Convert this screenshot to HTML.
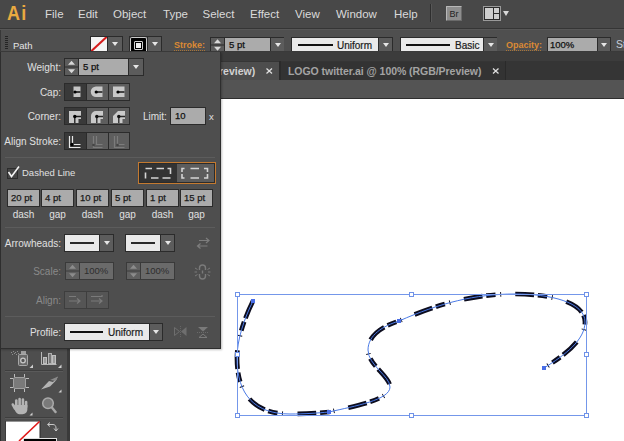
<!DOCTYPE html>
<html><head><meta charset="utf-8">
<style>
*{margin:0;padding:0;box-sizing:border-box}
html,body{width:624px;height:441px;overflow:hidden;background:#fff}
body{position:relative;font-family:"Liberation Sans",sans-serif;}
.a{position:absolute}
#menubar{left:0;top:0;width:624px;height:28px;background:#484848}
.mi{position:absolute;top:7px;font-size:11.5px;color:#dadada;line-height:14px}
#ctl{left:0;top:28px;width:624px;height:24px;background:#4f4f4f;border-top:1px solid #353535;box-shadow:inset 1px 0 #383838}
#ctl:before{content:"";position:absolute;left:0;top:0;width:624px;height:1px;background:#575757}
#ctl:after{content:"";position:absolute;left:0;top:22px;width:624px;height:1px;background:#3a3a3a}
#tabbar{left:0;top:52px;width:624px;height:28px;background:#3c3c3c}
#docbar{left:0;top:80px;width:624px;height:19px;background:#545454;border-bottom:1px solid #2e2e2e}
#canvas{left:70px;top:99px;width:554px;height:343px;background:#fff}
#tools{left:0;top:98px;width:70px;height:343px;background:#4e4e4e}
#panel{left:0;top:52px;width:221px;height:297px;background:#4e4e4e;border:1px solid #2e2e2e;border-top:none;box-shadow:1px 1px 2px rgba(0,0,0,.25)}
.lbl{position:absolute;font-size:10px;color:#e0e0e0;line-height:12px;white-space:nowrap}
.dis{color:#8a8a8a}
.lb9{font-size:9.5px;color:#e4e4e4;line-height:11px;white-space:nowrap}
.lbo{font-size:9px;font-weight:bold;color:#dc8a34;line-height:11px;white-space:nowrap;padding-bottom:0;background:repeating-linear-gradient(90deg,#a87438 0 1px,transparent 1px 2px) left bottom/100% 1px no-repeat}
.dd{background:#5c5c5c}
.dd:after{content:"";position:absolute;left:50%;top:50%;margin-left:-3px;margin-top:-2px;border-left:3px solid transparent;border-right:3px solid transparent;border-top:4px solid #e6e6e6}
.spin{background:#595959}
.spin:before{content:"";position:absolute;left:3px;top:2px;border-left:3.5px solid transparent;border-right:3.5px solid transparent;border-bottom:4px solid #d8d8d8}
.spin:after{content:"";position:absolute;left:3px;top:8px;border-left:3.5px solid transparent;border-right:3.5px solid transparent;border-top:4px solid #d8d8d8}
.inp{background:#ababab;color:#111;font-size:9.5px;-webkit-text-stroke:0.25px #111;line-height:14px;padding-left:4px;white-space:nowrap}
.wbox{background:#e9e9e9;color:#1a1a1a;font-size:10px;-webkit-text-stroke:0.2px #1a1a1a;line-height:11px;white-space:nowrap}
.btn{background:#5e5e5e}
.btn.sel{background:#393939}
.dbox{top:189px;width:33px;height:18px;background:#ababab;border:1px solid #2b2b2b;color:#1a1a1a;font-size:9.5px;-webkit-text-stroke:0.25px #1a1a1a;line-height:16px;padding-left:3px;white-space:nowrap}
.dl{top:209px;width:33px;text-align:center}
.dspin{background:#4d4d4d}
.dinp{background:#6a6a6a;color:#2e2e2e;font-size:9.5px;line-height:16px;padding-left:4px}
.sep{position:absolute;height:1px;background:#444;border-bottom:1px solid #5c5c5c}
</style></head><body>

<div id="menubar" class="a">
  <div class="a" style="left:7px;top:2px;font-size:20px;font-weight:bold;color:#eaaa40;line-height:22px;transform:scaleX(0.9);transform-origin:0 0;letter-spacing:1.5px">Ai</div>
  <div class="mi" style="left:45px">File</div>
  <div class="mi" style="left:78px">Edit</div>
  <div class="mi" style="left:113px">Object</div>
  <div class="mi" style="left:163px">Type</div>
  <div class="mi" style="left:202.5px">Select</div>
  <div class="mi" style="left:250px">Effect</div>
  <div class="mi" style="left:295px">View</div>
  <div class="mi" style="left:336px">Window</div>
  <div class="mi" style="left:394px">Help</div>
  <div class="a" style="left:430px;top:4px;width:1px;height:18px;background:#2e2e2e"></div>
  <div class="a" style="left:431px;top:4px;width:1px;height:18px;background:#575757"></div>
  <div class="a" style="left:446px;top:6px;width:16px;height:15px;background:#8e8e8e;border:1px solid #b8b8b8;border-right-color:#6a6a6a;border-bottom-color:#6a6a6a;border-radius:1px"></div>
  <div class="a" style="left:449.5px;top:9px;font-size:9px;line-height:10px;color:#222">Br</div>
  <div class="a" style="left:483px;top:6px;width:18px;height:15px;background:#2c2c2c;border:1px solid #9a9a9a"></div>
  <div class="a" style="left:485px;top:8px;width:8px;height:11px;background:#cfcfcf"></div>
  <div class="a" style="left:494px;top:8px;width:5px;height:5px;background:#cfcfcf"></div>
  <div class="a" style="left:494px;top:14px;width:5px;height:5px;background:#cfcfcf"></div>
  <div class="a" style="left:503px;top:11px;border-left:3px solid transparent;border-right:3px solid transparent;border-top:5px solid #d8d8d8"></div>
</div>

<div id="ctl" class="a">
  <div class="a" style="left:5px;top:7px;width:3px;height:14px;background:repeating-linear-gradient(#252525 0 1px,transparent 1px 2px)"></div>
  <div class="a lb9" style="left:13px;top:11px">Path</div>
  <div class="a" style="left:90px;top:7px;width:33px;height:16px;background:#2b2b2b"></div>
  <div class="a" style="left:91px;top:8px;width:16px;height:14px;background:#f4f4f4;overflow:hidden"><div class="a" style="left:-3px;top:6px;width:22px;height:2px;background:#d41b1b;transform:rotate(-43deg)"></div></div>
  <div class="a dd" style="left:108px;top:8px;width:14px;height:14px"></div>
  <div class="a" style="left:129px;top:7px;width:33px;height:16px;background:#2b2b2b"></div>
  <div class="a" style="left:130px;top:8px;width:17px;height:15px;background:#000;border:1px solid #c8c8c8;border-bottom:none;border-radius:2px 2px 0 0"></div>
  <div class="a" style="left:134px;top:12px;width:9px;height:9px;border:1px solid #d0d0d0;border-radius:1px;background:#000"></div>
  <div class="a" style="left:136px;top:14px;width:5px;height:5px;background:#f0f0f0"></div>
  <div class="a dd" style="left:148px;top:8px;width:13px;height:14px"></div>
  <div class="a lbo" style="left:174px;top:11px">Stroke:</div>
  <div class="a" style="left:210px;top:8px;width:74px;height:16px;background:#2b2b2b"></div>
  <svg class="a" style="left:211px;top:9px" width="13" height="14"><rect x="0" y="0" width="13" height="6.5" fill="#5c5c5c"/><rect x="0" y="7.5" width="13" height="6.5" fill="#5c5c5c"/><path d="M3.0,5.25 L6.5,1.25 L10.0,5.25 Z" fill="#d8d8d8"/><path d="M3.0,8.75 L6.5,12.75 L10.0,8.75 Z" fill="#d8d8d8"/></svg>
  <div class="a inp" style="left:225px;top:9px;width:45px;height:14px">5 pt</div>
  <div class="a dd" style="left:271px;top:9px;width:13px;height:14px"></div>
  <div class="a" style="left:291px;top:8px;width:102px;height:16px;background:#2b2b2b"></div>
  <div class="a wbox" style="left:292px;top:9px;width:86px;height:14px"><div class="a" style="left:6px;top:6px;width:35px;height:2px;background:#111"></div><span class="a" style="left:45px;top:2px">Uniform</span></div>
  <div class="a dd" style="left:379px;top:9px;width:13px;height:14px"></div>
  <div class="a" style="left:400px;top:8px;width:97px;height:16px;background:#2b2b2b"></div>
  <div class="a wbox" style="left:401px;top:9px;width:82px;height:14px"><div class="a" style="left:5px;top:6px;width:44px;height:2px;background:#111"></div><span class="a" style="left:54px;top:2px">Basic</span></div>
  <div class="a dd" style="left:484px;top:9px;width:13px;height:14px"></div>
  <div class="a lbo" style="left:506px;top:11px">Opacity:</div>
  <div class="a" style="left:547px;top:8px;width:64px;height:16px;background:#2b2b2b"></div>
  <div class="a inp" style="left:548px;top:9px;width:49px;height:14px;padding-left:2px">100%</div>
  <div class="a dd" style="left:598px;top:9px;width:12px;height:14px"></div>
  <div class="a lb9" style="left:616px;top:10px;font-size:10.5px;color:#c8d0dc">St</div>
</div>
<div id="tabbar" class="a">
  <div class="a" style="left:0;top:9px;width:624px;height:19px;background:#353535"></div>
  <div class="a" style="left:0;top:10px;width:279px;height:18px;background:#4d4d4d"></div>
  <div class="a" style="left:212px;top:13px;font-size:10.5px;line-height:12px;color:#d2d2d2;font-weight:bold">Preview)</div>
  <div class="a" style="left:279px;top:9px;width:2px;height:19px;background:#2b2b2b"></div>
  <div class="a" style="left:281px;top:10px;width:224px;height:18px;background:#333333"></div>
  <div class="a" style="left:288px;top:13px;font-size:10.5px;line-height:12px;color:#a4a4a4;font-weight:bold;letter-spacing:-0.05px">LOGO twitter.ai @ 100% (RGB/Preview)</div>
  <div class="a" style="left:505px;top:9px;width:1px;height:19px;background:#2a2a2a"></div>
  <svg class="a" style="left:0;top:0" width="624" height="28"><g stroke="#e0e0e0" stroke-width="1.25"><path d="M266.5,16.5 L272,21.5 M272,16.5 L266.5,21.5"/><path d="M493,16.5 L498.5,21.5 M498.5,16.5 L493,21.5"/></g></svg>
</div>
<div id="docbar" class="a"></div>
<div id="canvas" class="a"></div>
<svg class="a" style="left:0;top:0" width="624" height="441" viewBox="0 0 624 441">
  <path d="M253,301 C244,319 237,340 237,358 C237,395 255,414 290,414 C305,414 318,413 329,412 C355,406 390,400 390,387 C390,376 368,365 368,350 C368,335 383,326 399,321 C440,303 475,294 515,294 C550,294 585,302 585,322 C585,340 565,355 544,368" fill="none" stroke="#0d0d1e" stroke-width="4.7" stroke-dasharray="18.79 3.76 9.39 4.7 0.94 14.09"/>
  <path d="M253,301 C244,319 237,340 237,358 C237,395 255,414 290,414 C305,414 318,413 329,412 C355,406 390,400 390,387 C390,376 368,365 368,350 C368,335 383,326 399,321 C440,303 475,294 515,294 C550,294 585,302 585,322 C585,340 565,355 544,368" fill="none" stroke="#4a7ae6" stroke-width="1"/>
  <g fill="#4a6ee6"><rect x="251" y="299" width="4" height="4"/><rect x="327" y="410" width="4" height="4"/><rect x="397" y="319" width="4" height="4"/><rect x="542" y="366" width="4" height="4"/></g>
  <rect x="237.5" y="294.5" width="349" height="121" fill="none" stroke="#7497ea" stroke-width="1"/>
  <g fill="#fff" stroke="#6f92e8" stroke-width="1"><rect x="235.5" y="292.5" width="4" height="4"/><rect x="409.5" y="292.5" width="4" height="4"/><rect x="584.5" y="292.5" width="4" height="4"/><rect x="235.5" y="352.5" width="4" height="4"/><rect x="584.5" y="352.5" width="4" height="4"/><rect x="235.5" y="413.5" width="4" height="4"/><rect x="409.5" y="413.5" width="4" height="4"/><rect x="584.5" y="413.5" width="4" height="4"/></g>
</svg>
<div id="tools" class="a"></div>
<svg class="a" style="left:0;top:0" width="72" height="441" viewBox="0 0 72 441">
  <rect x="0" y="348" width="1" height="93" fill="#2e2e2e"/>
  <rect x="67" y="348" width="3" height="93" fill="#3a3a3a"/>
  <!-- symbol sprayer -->
  <g fill="#8e8e8e"><rect x="11" y="352" width="1" height="1"/><rect x="13" y="351" width="1" height="1"/><rect x="15" y="352" width="1" height="1"/><rect x="12" y="354" width="1" height="1"/><rect x="14" y="353" width="1" height="1"/><rect x="17" y="351" width="1" height="1"/><rect x="16" y="354" width="1" height="1"/><rect x="18" y="353" width="1" height="1"/></g>
  <rect x="21" y="351" width="5" height="3" fill="#a0a0a0"/>
  <rect x="18.5" y="354.5" width="9" height="11" fill="#6a6a6a" stroke="#a8a8a8" stroke-width="1" rx="1"/>
  <circle cx="23" cy="360.5" r="2.3" fill="#555" stroke="#c8c8c8" stroke-width="1.3"/>
  <path d="M33,364.5 L33,368 L29.5,368 Z" fill="#d0d0d0"/>
  <!-- graph -->
  <path d="M41.5,352 L41.5,364.5 L56.5,364.5" fill="none" stroke="#b8b8b8" stroke-width="1"/>
  <rect x="43.5" y="357.5" width="3" height="6" fill="#9a9a9a" stroke="#c0c0c0" stroke-width="1"/>
  <rect x="48.5" y="353.5" width="3" height="10" fill="#777" stroke="#b0b0b0" stroke-width="1"/>
  <rect x="52.5" y="355.5" width="3" height="8" fill="#9a9a9a" stroke="#c0c0c0" stroke-width="1"/>
  <path d="M61.5,364.5 L61.5,368 L58,368 Z" fill="#d0d0d0"/>
  <rect x="5" y="370" width="58" height="1" fill="#3e3e3e"/><rect x="5" y="371" width="58" height="1" fill="#5a5a5a"/>
  <!-- artboard -->
  <rect x="13.5" y="377.5" width="12" height="11" rx="1.5" fill="#7a7a7a" stroke="#a0a0a0" stroke-width="1"/>
  <g stroke="#bcbcbc" stroke-width="1"><path d="M14.5,374 V377 M24.5,374 V377 M14.5,389 V392 M24.5,389 V392 M10,378.5 H13 M26,378.5 H29 M10,387.5 H13 M26,387.5 H29"/></g>
  <!-- slice -->
  <path d="M41,389.5 L49,381 L53,382 L58,376.5 L56,380.5 L50,386.5 Z" fill="#b4b4b4"/>
  <path d="M50,380 L58,376.5 L55.5,381 Z" fill="#8a8a8a"/>
  <path d="M61.5,389.5 L61.5,392.5 L58.5,392.5 Z" fill="#d0d0d0"/>
  <!-- hand -->
  <g stroke="#b4b4b4" stroke-width="2.6" stroke-linecap="round" fill="none">
    <path d="M16.3,407 V400.5"/><path d="M19.6,406 V399"/><path d="M22.9,406 V399.5"/><path d="M26.1,407 V402"/>
    <path d="M15,408.5 L12.8,404.5"/>
  </g>
  <path d="M14.8,405 H27.4 V409 C27.4,412 25.5,414.2 22.5,414.2 H19.5 C17.5,414.2 16.2,413 15.2,411 L13.5,407 Z" fill="#b4b4b4"/>
  <path d="M32.5,412.5 L32.5,415.5 L29.5,415.5 Z" fill="#d0d0d0"/>
  <!-- zoom -->
  <line x1="51.5" y1="407" x2="55.5" y2="412" stroke="#a8a8a8" stroke-width="2.4" stroke-linecap="round"/>
  <circle cx="48" cy="403.2" r="5.3" fill="#7a7a7a" stroke="#aaaaaa" stroke-width="1.5"/>
  <rect x="5" y="417" width="58" height="1" fill="#3e3e3e"/><rect x="5" y="418" width="58" height="1" fill="#5a5a5a"/>
  <!-- fill/stroke -->
  <rect x="5.5" y="421" width="35" height="21" fill="#2a2a2a"/>
  <rect x="6" y="421.5" width="33.5" height="20" fill="#ffffff"/>
  <line x1="39.5" y1="421.5" x2="19" y2="441" stroke="#e01818" stroke-width="1.6"/>
  <path d="M48,424.5 H53 C55,424.5 56,426 56,428 V431" fill="none" stroke="#c8c8c8" stroke-width="1"/>
  <path d="M47.5,424.5 L50,422.5 M47.5,424.5 L50,426.5 M56,431 L54,428.5 M56,431 L58,428.5" stroke="#c8c8c8" stroke-width="1"/>
  <rect x="23.5" y="438.5" width="33" height="5" fill="#000" stroke="#e0e0e0" stroke-width="1"/>
</svg>
<div id="panel" class="a"></div>
<div class="a" style="left:0;top:0">
  <!-- Weight -->
  <div class="lbl" style="top:62px;text-align:right;width:60px;left:1px">Weight:</div>
  <div class="a" style="left:64px;top:58px;width:80px;height:18px;background:#2b2b2b"></div>
  <svg class="a" style="left:65px;top:59px" width="13" height="16"><rect x="0" y="0" width="13" height="7.5" fill="#5c5c5c"/><rect x="0" y="8.5" width="13" height="7.5" fill="#5c5c5c"/><path d="M3.0,5.75 L6.5,1.75 L10.0,5.75 Z" fill="#d8d8d8"/><path d="M3.0,10.25 L6.5,14.25 L10.0,10.25 Z" fill="#d8d8d8"/></svg>
  <div class="a inp" style="left:79px;top:59px;width:49px;height:16px;line-height:16px">5 pt</div>
  <div class="a dd" style="left:129px;top:59px;width:14px;height:16px"></div>
  <!-- Cap -->
  <div class="lbl" style="left:1px;width:60px;text-align:right;top:87px">Cap:</div>
  <div class="a" style="left:64px;top:83px;width:66px;height:18px;background:#2b2b2b"></div>
  <div class="a btn sel" style="left:65px;top:84px;width:21px;height:16px"></div>
  <div class="a btn" style="left:87px;top:84px;width:21px;height:16px"></div>
  <div class="a btn" style="left:109px;top:84px;width:20px;height:16px"></div>
  <!-- Corner -->
  <div class="lbl" style="left:1px;width:60px;text-align:right;top:111px">Corner:</div>
  <div class="a" style="left:64px;top:107px;width:66px;height:18px;background:#2b2b2b"></div>
  <div class="a btn sel" style="left:65px;top:108px;width:21px;height:16px"></div>
  <div class="a btn" style="left:87px;top:108px;width:21px;height:16px"></div>
  <div class="a btn" style="left:109px;top:108px;width:20px;height:16px"></div>
  <div class="lbl" style="left:143px;top:111px">Limit:</div>
  <div class="a" style="left:170px;top:107px;width:36px;height:18px;background:#2b2b2b"></div>
  <div class="a inp" style="left:171px;top:108px;width:34px;height:16px;line-height:16px">10</div>
  <div class="lbl" style="left:209px;top:111px;font-size:9.5px">x</div>
  <!-- Align -->
  <div class="lbl" style="left:1px;width:60px;text-align:right;top:136px">Align Stroke:</div>
  <div class="a" style="left:64px;top:132px;width:66px;height:18px;background:#2b2b2b"></div>
  <div class="a btn sel" style="left:65px;top:133px;width:21px;height:16px"></div>
  <div class="a btn" style="left:87px;top:133px;width:21px;height:16px"></div>
  <div class="a btn" style="left:109px;top:133px;width:20px;height:16px"></div>
  <div class="sep" style="left:5px;top:157px;width:210px"></div>
  <!-- Dashed -->
  <div class="a" style="left:7px;top:168px;width:11px;height:11px;background:#454545;border:1px solid #2c2c2c"></div>
  <div class="lbl" style="left:22px;top:167px;font-size:9.5px">Dashed Line</div>
  <div class="a" style="left:138px;top:162px;width:78px;height:22px;border:1px solid #c47a30;background:#2b2b2b"></div>
  <div class="a" style="left:140px;top:164px;width:37px;height:18px;background:#333"></div>
  <div class="a" style="left:177px;top:164px;width:37px;height:18px;background:#5c5c5c"></div>
  <!-- dash inputs -->
  <div class="a dbox" style="left:7px">20 pt</div>
  <div class="a dbox" style="left:41px">4 pt</div>
  <div class="a dbox" style="left:76px">10 pt</div>
  <div class="a dbox" style="left:111px">5 pt</div>
  <div class="a dbox" style="left:146px">1 pt</div>
  <div class="a dbox" style="left:180px">15 pt</div>
  <div class="lbl dl" style="left:7px">dash</div>
  <div class="lbl dl" style="left:41px">gap</div>
  <div class="lbl dl" style="left:76px">dash</div>
  <div class="lbl dl" style="left:111px">gap</div>
  <div class="lbl dl" style="left:146px">dash</div>
  <div class="lbl dl" style="left:180px">gap</div>
  <div class="sep" style="left:5px;top:227px;width:210px"></div>
  <!-- Arrowheads -->
  <div class="lbl" style="left:1px;width:60px;text-align:right;top:238px">Arrowheads:</div>
  <div class="a" style="left:64px;top:234px;width:50px;height:18px;background:#2b2b2b"></div>
  <div class="a wbox" style="left:65px;top:235px;width:34px;height:16px"><div class="a" style="left:5px;top:7px;width:24px;height:1.5px;background:#2a2a2a"></div></div>
  <div class="a dd" style="left:100px;top:235px;width:13px;height:16px"></div>
  <div class="a" style="left:125px;top:234px;width:50px;height:18px;background:#2b2b2b"></div>
  <div class="a wbox" style="left:126px;top:235px;width:34px;height:16px"><div class="a" style="left:5px;top:7px;width:24px;height:1.5px;background:#2a2a2a"></div></div>
  <div class="a dd" style="left:161px;top:235px;width:13px;height:16px"></div>
  <!-- Scale -->
  <div class="lbl dis" style="left:1px;width:60px;text-align:right;top:266px">Scale:</div>
  <div class="a" style="left:65px;top:262px;width:49px;height:18px;background:#3a3a3a"></div>
  <svg class="a" style="left:66px;top:263px" width="13" height="16"><rect x="0" y="0" width="13" height="7.5" fill="#606060"/><rect x="0" y="8.5" width="13" height="7.5" fill="#606060"/><path d="M3.0,5.75 L6.5,1.75 L10.0,5.75 Z" fill="#8c8c8c"/><path d="M3.0,10.25 L6.5,14.25 L10.0,10.25 Z" fill="#8c8c8c"/></svg>
  <div class="a dinp" style="left:80px;top:263px;width:33px;height:16px">100%</div>
  <div class="a" style="left:126px;top:262px;width:49px;height:18px;background:#3a3a3a"></div>
  <svg class="a" style="left:127px;top:263px" width="13" height="16"><rect x="0" y="0" width="13" height="7.5" fill="#606060"/><rect x="0" y="8.5" width="13" height="7.5" fill="#606060"/><path d="M3.0,5.75 L6.5,1.75 L10.0,5.75 Z" fill="#8c8c8c"/><path d="M3.0,10.25 L6.5,14.25 L10.0,10.25 Z" fill="#8c8c8c"/></svg>
  <div class="a dinp" style="left:141px;top:263px;width:33px;height:16px">100%</div>
  <!-- Align -->
  <div class="lbl dis" style="left:1px;width:60px;text-align:right;top:295px">Align:</div>
  <div class="a" style="left:64px;top:291px;width:45px;height:18px;background:#3e3e3e"></div>
  <div class="a" style="left:65px;top:292px;width:21px;height:16px;background:#555"></div>
  <div class="a" style="left:87px;top:292px;width:21px;height:16px;background:#555"></div>
  <div class="sep" style="left:5px;top:316px;width:210px"></div>
  <!-- Profile -->
  <div class="lbl" style="left:1px;width:60px;text-align:right;top:327px">Profile:</div>
  <div class="a" style="left:64px;top:323px;width:99px;height:18px;background:#2b2b2b"></div>
  <div class="a wbox" style="left:65px;top:324px;width:84px;height:16px"><div class="a" style="left:5px;top:7px;width:33px;height:2px;background:#111"></div><span class="a" style="left:43px;top:3px">Uniform</span></div>
  <div class="a dd" style="left:150px;top:324px;width:12px;height:16px"></div>
</div>
<svg class="a" style="left:0;top:0" width="222" height="350" viewBox="0 0 222 350">
  <!-- cap icons -->
  <rect x="73.5" y="86.5" width="7" height="10.5" fill="#c4c4c4"/>
  <rect x="75" y="91" width="5.5" height="2" fill="#3a3a3a"/>
  <circle cx="75" cy="92" r="1.6" fill="#000"/>
  <path d="M96,86.5 H102.5 V97 H96 A5.25,5.25 0 0 1 96,86.5 Z" fill="#c8c8c8"/>
  <rect x="96" y="91" width="6.5" height="2" fill="#444"/>
  <circle cx="96.2" cy="92" r="1.6" fill="#000"/>
  <rect x="113" y="86.5" width="11.5" height="10.5" fill="#c8c8c8"/>
  <rect x="118" y="91" width="6.5" height="2" fill="#444"/>
  <circle cx="118" cy="92" r="1.6" fill="#000"/>
  <!-- corner icons -->
  <path d="M69,111 H81 V119 H78.5 V123 H69 Z" fill="#c8c8c8"/>
  <path d="M74.8,116.5 H81 M74.8,116.5 V123" stroke="#1a1a1a" stroke-width="1.3"/><circle cx="74.8" cy="116.5" r="1.7" fill="#000"/>
  <path d="M96,111 H103 V119 H100.5 V123 H91 V116 A5,5 0 0 1 96,111 Z" fill="#cacaca"/>
  <path d="M96.8,116.5 H103 M96.8,116.5 V123" stroke="#2a2a2a" stroke-width="1.3"/><circle cx="96.8" cy="116.5" r="1.7" fill="#111"/>
  <path d="M118,111 H125 V119 H122.5 V123 H113 V116 Z" fill="#cacaca"/>
  <path d="M118.8,116.5 H125 M118.8,116.5 V123" stroke="#2a2a2a" stroke-width="1.3"/><circle cx="118.8" cy="116.5" r="1.7" fill="#111"/>
  <!-- align stroke icons -->
  <path d="M69.5,136 V147.5 H80.5" fill="none" stroke="#e8e8e8" stroke-width="1.2"/>
  <path d="M72.5,136 V144.5 H80.5" fill="none" stroke="#e8e8e8" stroke-width="1.2"/>
  <circle cx="72" cy="144.5" r="1.7" fill="#000"/>
  <path d="M93.5,136 V147.5 H102.5 M96.5,136 V144.5 H102.5" fill="none" stroke="#7c7c7c" stroke-width="1.2"/>
  <circle cx="93.5" cy="145" r="1.3" fill="#444"/>
  <path d="M114.5,136 V147.5 H124.5 M117.5,136 V144.5 H124.5" fill="none" stroke="#7c7c7c" stroke-width="1.2"/>
  <circle cx="117.5" cy="145" r="1.3" fill="#444"/>
  <!-- dash icons -->
  <g fill="none" stroke="#d4d4d4" stroke-width="1.6">
    <path d="M145.5,168.5 H152 M156.5,168.5 H164 M167.5,168.5 H170.5 V174 M145.5,172.5 V178.5 M151,178 H158.5 M162.5,178 H170.5"/>
    <path d="M182,172 V168.5 H184.5 M190.5,168.5 H199 M204,168.5 H207.5 V172 M182,174 V178 H184.5 M190.5,178 H199 M204,178 H207.5 V174"/>
  </g>
  <!-- checkmark -->
  <path d="M8.5,172 L11.5,176.5 L19,166.5" fill="none" stroke="#f2f2f2" stroke-width="1.6"/>
  <!-- arrowheads swap -->
  <g fill="none" stroke="#7d7d7d" stroke-width="1.2">
    <path d="M199,240.5 H209 M206,238 L209,240.5 L206,243"/>
    <path d="M197.5,246 H207.5 M200.5,243.5 L197.5,246 L200.5,248.5"/>
  </g>
  <!-- link -->
  <g fill="none" stroke="#7a7a7a" stroke-width="1.4">
    <path d="M199.5,270 V268 A3,3 0 0 1 205.5,268 V270 M199.5,274 V276 A3,3 0 0 0 205.5,276 V274"/>
    <path d="M202.5,270.5 V273.5" />
    <path d="M195,268 L197.5,269.5 M195,276 L197.5,274.5 M210,268 L207.5,269.5 M210,276 L207.5,274.5 M194.5,272 H197 M208,272 H210.5" stroke-width="1"/>
  </g>
  <!-- align arrows -->
  <g fill="none" stroke="#7a7a7a" stroke-width="1.2">
    <path d="M69,296.5 H76 M69,301 H80 M77,298.5 L80,301 L77,303.5"/>
    <path d="M91,296.5 H102 V295 M91,301 H102 M99,298.5 L102,301 L99,303.5"/>
  </g>
  <!-- profile flips -->
  <path d="M174.5,327.5 V335.5 L179.5,331.5 Z" fill="none" stroke="#6e6e6e" stroke-width="1"/>
  <path d="M186.5,327 V336 L181,331.5 Z" fill="#6e6e6e"/>
  <path d="M180.5,326 V337" stroke="#666" stroke-width="1" stroke-dasharray="1 1"/>
  <path d="M198,327 H208 L203,331.5 Z" fill="#7a7a7a"/>
  <path d="M199,337.5 H207 L203,334 Z" fill="none" stroke="#7a7a7a" stroke-width="1"/>
  <path d="M197,332.5 H209" stroke="#6a6a6a" stroke-width="1" stroke-dasharray="1 1"/>
</svg>

</body></html>
